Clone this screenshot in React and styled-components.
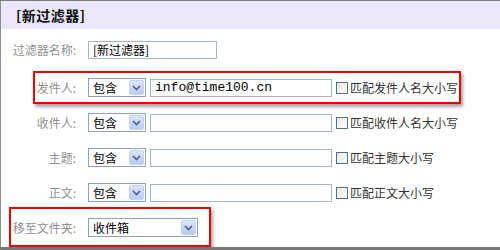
import styled, { createGlobalStyle } from "styled-components";

const GlobalStyle = createGlobalStyle`
  html, body {
    margin: 0;
    padding: 0;
    background: #ffffff;
  }
  body {
    font-family: "Noto Sans CJK SC", "Noto Sans", sans-serif;
  }
`;

const rows = [
  { id: 1, label: "发件人:", value: "info@time100.cn", check: "匹配发件人名大小写", mark: { top: 1, bottom: 1, left: 32, width: 428 } },
  { id: 2, label: "收件人:", value: "", check: "匹配收件人名大小写" },
  { id: 3, label: "主题:", value: "", check: "匹配主题大小写" },
  { id: 4, label: "正文:", value: "", check: "匹配正文大小写" }
];

function Chevron() {
  return (
    <svg width="9" height="6" viewBox="0 0 9 6">
      <path d="M1 1 L4.5 4.5 L8 1" fill="none" stroke="#4d6185" strokeWidth="1.6" />
    </svg>
  );
}

function Combo({ value, width }) {
  return (
    <Select $width={width}>
      <span>{value}</span>
      <DropButton>
        <Chevron />
      </DropButton>
    </Select>
  );
}

function App() {
  return (
    <>
      <GlobalStyle />
      <Page>
        <Header>[新过滤器]</Header>
        <Body>
          <Row $h={41}>
            <Label>过滤器名称:</Label>
            <TextBox $width={129}>[新过滤器]</TextBox>
          </Row>
          {rows.map(row => (
            <Row $h={35} key={row.id}>
              <Label>{row.label}</Label>
              <Combo value="包含" width={58} />
              <TextBox $width={182} $mono>{row.value}</TextBox>
              <Check>
                <Box />
                {row.check}
              </Check>
              {row.mark && <Mark {...row.mark} />}
            </Row>
          ))}
          <Row $h={35}>
            <Label>移至文件夹:</Label>
            <Combo value="收件箱" width={110} />
            <Mark top={-3} bottom={-2} left={8} width={202} />
          </Row>
        </Body>
      </Page>
    </>
  );
}

const Mark = styled.div.attrs(p => ({
  style: { top: p.top, bottom: p.bottom, left: p.left, width: p.width }
}))`
  position: absolute;
  box-sizing: border-box;
  border: 2px solid #f20000;
  box-shadow: 2px 3px 3px rgba(0, 0, 0, 0.35);
  pointer-events: none;
`;

const Page = styled.div`
  box-sizing: border-box;
  width: 500px;
  height: 250px;
  border-top: 1px solid #7d7d7d;
  border-left: 1px solid #8c8c8c;
  border-bottom: 3px solid #777777;
  background: #ffffff;
  display: flex;
  flex-direction: column;
  overflow: hidden;
`;

const Header = styled.div`
  height: 28px;
  display: flex;
  align-items: center;
  padding-left: 15px;
  background: #ebe7f9;
  color: #111111;
  font-size: 14px;
  font-weight: bold;
  letter-spacing: 0.5px;
`;

const Body = styled.div`
  display: flex;
  flex-direction: column;
`;

const Row = styled.div`
  position: relative;
  height: ${p => p.$h}px;
  display: flex;
  align-items: center;
  padding-left: 11px;
`;

const Label = styled.div`
  width: 64px;
  margin-right: 12px;
  text-align: right;
  color: #8f8f8f;
  font-size: 12px;
  white-space: nowrap;
`;

const TextBox = styled.div`
  box-sizing: border-box;
  width: ${p => p.$width}px;
  height: 18px;
  margin-right: 4px;
  border: 1px solid #a3b5ca;
  padding-left: 4px;
  display: flex;
  align-items: center;
  color: #000000;
  font-family: ${p => (p.$mono ? '"Liberation Mono", monospace' : '"Noto Sans CJK SC", sans-serif')};
  font-size: ${p => (p.$mono ? 13 : 12)}px;
  white-space: nowrap;
`;

const Select = styled.div`
  box-sizing: border-box;
  width: ${p => p.$width}px;
  height: 19px;
  margin-right: 4px;
  border: 1px solid #8aa3bf;
  padding: 1px 1px 1px 4px;
  display: flex;
  align-items: center;
  justify-content: space-between;
  color: #000000;
  font-size: 12px;
  span {
    line-height: 15px;
  }
`;

const DropButton = styled.div`
  box-sizing: border-box;
  width: 15px;
  height: 15px;
  border: 1px solid #c2d2f0;
  border-radius: 2px;
  background: linear-gradient(#dbe5fc, #b8cbf4);
  display: grid;
  place-items: center;
`;

const Check = styled.div`
  display: flex;
  align-items: center;
  gap: 2px;
  color: #333333;
  font-size: 12px;
  white-space: nowrap;
`;

const Box = styled.span`
  box-sizing: border-box;
  width: 12px;
  height: 12px;
  border: 1px solid #50708f;
  background: linear-gradient(135deg, #e6e6e0, #ffffff);
`;

export default App;
